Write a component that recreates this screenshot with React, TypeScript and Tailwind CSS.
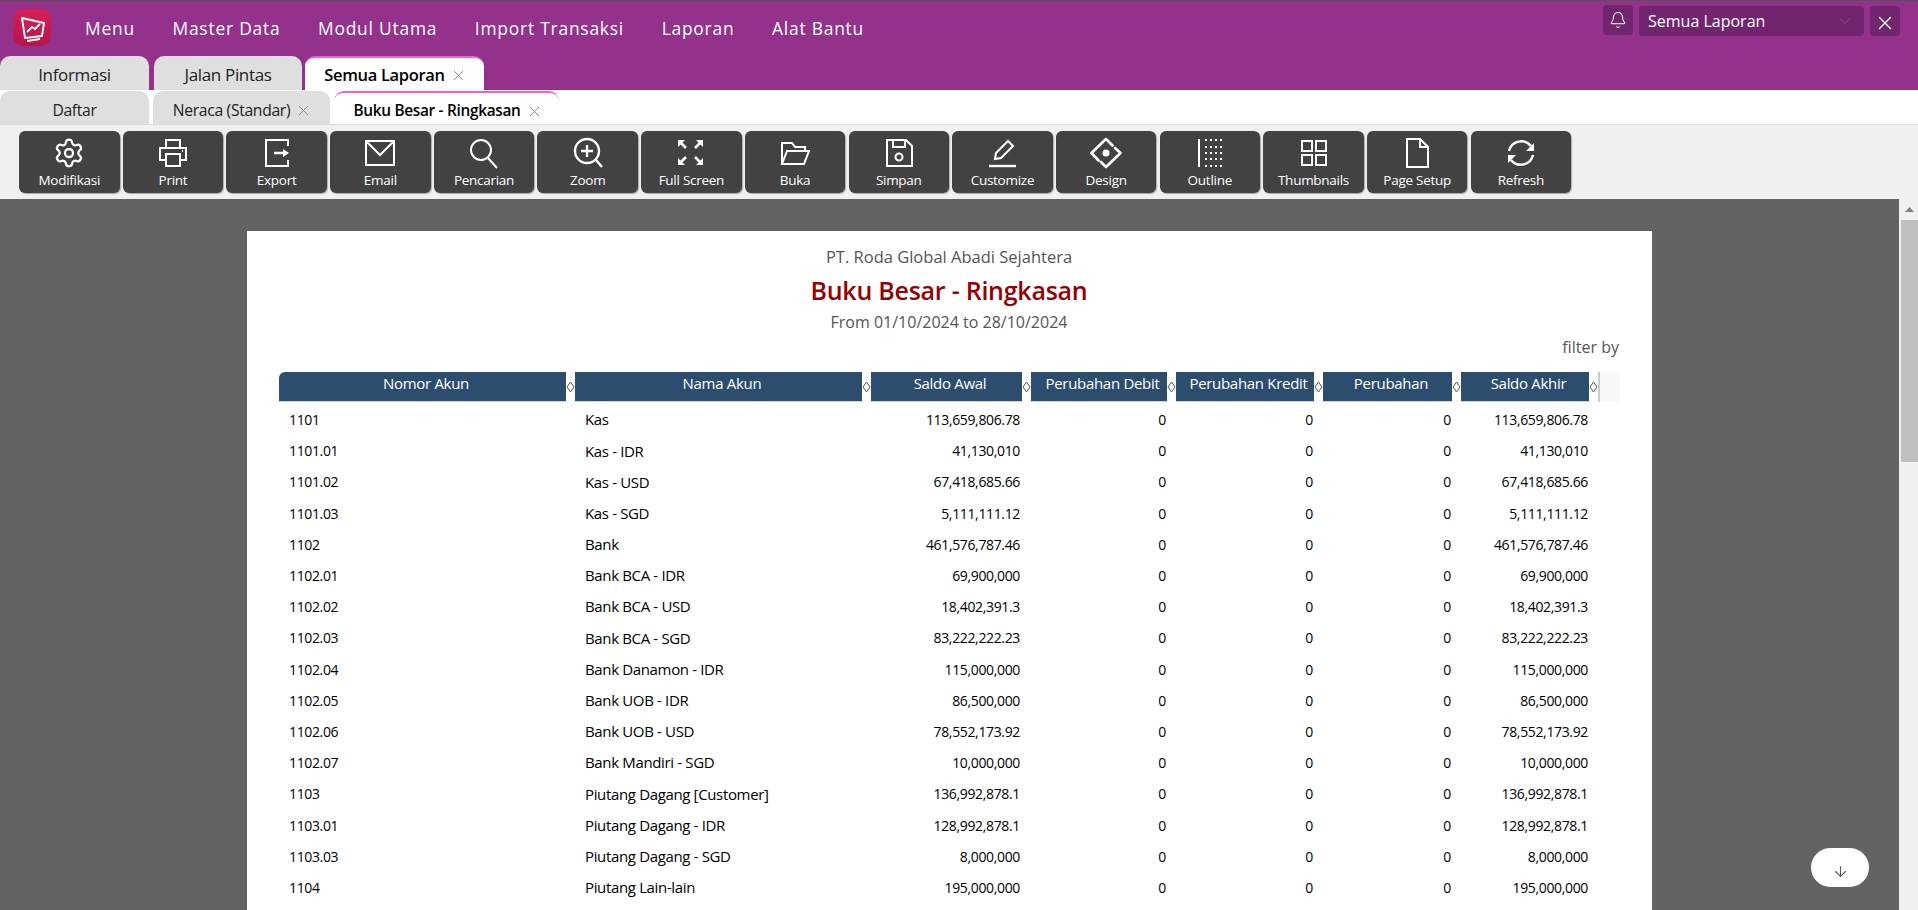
import { Bell, ChevronDown, ArrowDown, Settings, X } from 'lucide-react'
import type { ReactNode } from 'react'

const MENUS = ['Menu', 'Master Data', 'Modul Utama', 'Import Transaksi', 'Laporan', 'Alat Bantu']

const ic = (children: ReactNode) => (
  <svg width="32" height="32" viewBox="0 0 32 32" fill="none" stroke="white" strokeWidth="2">
    {children}
  </svg>
)

const TOOLS: { label: string; icon: ReactNode }[] = [
  { label: 'Modifikasi', icon: <Settings size={32} strokeWidth={1.7} color="white" /> },
  {
    label: 'Print',
    icon: ic(
      <>
        <path d="M9 11V3h14v8" />
        <path d="M9 23H3V11h26v12h-6" />
        <path d="M9 17h14v12H9z" />
        <path d="M25 14h1" />
      </>,
    ),
  },
  {
    label: 'Export',
    icon: ic(
      <>
        <path d="M27 9V3H5v26h22v-6" />
        <path d="M13 16h10" strokeWidth="2.5" />
        <path d="M22 12l6 4-6 4z" fill="white" stroke="none" />
      </>,
    ),
  },
  {
    label: 'Email',
    icon: ic(
      <>
        <path d="M2 4h28v24H2z" />
        <path d="M2 4l14 14L30 4" />
      </>,
    ),
  },
  {
    label: 'Pencarian',
    icon: ic(
      <>
        <circle cx="13" cy="13" r="10" />
        <path d="M20 21l9 10" />
      </>,
    ),
  },
  {
    label: 'Zoom',
    icon: ic(
      <>
        <circle cx="15" cy="14" r="12" strokeWidth="2.4" />
        <path d="M15 8v12M9 14h12" strokeWidth="2.4" />
        <path d="M24 23l6 7" strokeWidth="2.4" />
      </>,
    ),
  },
  {
    label: 'Full Screen',
    icon: ic(
      <>
        <path d="M5 5l6 6M26 5l-6 6M5 26l6-6M26 26l-6-6" strokeWidth="2.6" />
        <path d="M3 3h7l-7 7zM28 3h-7l7 7zM3 28h7l-7-7zM28 28h-7l7-7z" fill="white" stroke="none" />
      </>,
    ),
  },
  {
    label: 'Buka',
    icon: ic(
      <>
        <path d="M3 27V6h10l3 4h10v4" />
        <path d="M3 27l5-13h22l-5 13z" />
      </>,
    ),
  },
  {
    label: 'Simpan',
    icon: ic(
      <>
        <path d="M4 3h19l6 6v20H4z" />
        <path d="M10 3v7h12V3" />
        <circle cx="16" cy="20" r="3.5" />
      </>,
    ),
  },
  {
    label: 'Customize',
    icon: ic(
      <>
        <path d="M9 22l1-6L22 4l5 5-12 12z" />
        <path d="M3 29h27" strokeWidth="2.4" />
      </>,
    ),
  },
  {
    label: 'Design',
    icon: ic(
      <>
        <path d="M8.500 23.500L1.500 16 16 2l6.500 6.500" strokeWidth="2.6" strokeLinecap="round" strokeLinejoin="round" />
        <path d="M25 11l5.500 5L16 30l-5-5" strokeWidth="2.6" strokeLinecap="round" strokeLinejoin="round" />
        <circle cx="16" cy="16" r="3.5" fill="white" stroke="none" />
      </>,
    ),
  },
  {
    label: 'Outline',
    icon: ic(
      <>
        <path d="M5 2v28" />
        <path d="M11 3h18M11 10h18M11 16h18M11 22h18M11 29h18" strokeDasharray="2 3" />
      </>,
    ),
  },
  {
    label: 'Thumbnails',
    icon: ic(
      <>
        <path d="M4 4h10v10H4zM18 4h10v10H18zM4 18h10v10H4zM18 18h10v10H18z" />
      </>,
    ),
  },
  {
    label: 'Page Setup',
    icon: ic(
      <>
        <path d="M6 2h13l8 8v20H6z" />
        <path d="M19 2v8h8" />
      </>,
    ),
  },
  {
    label: 'Refresh',
    icon: ic(
      <>
        <path d="M4 14A12.5 12.5 0 0 1 26 9" strokeWidth="2.4" />
        <path d="M28 18A12.5 12.5 0 0 1 6 23" strokeWidth="2.4" />
        <path d="M29 6v8h-8zM3 26v-8h8z" fill="white" stroke="none" />
      </>,
    ),
  },
]

const COLUMNS = ['Nomor Akun', 'Nama Akun', 'Saldo Awal', 'Perubahan Debit', 'Perubahan Kredit', 'Perubahan', 'Saldo Akhir']

const ROWS = [
  ['1101', 'Kas', '113,659,806.78'],
  ['1101.01', 'Kas - IDR', '41,130,010'],
  ['1101.02', 'Kas - USD', '67,418,685.66'],
  ['1101.03', 'Kas - SGD', '5,111,111.12'],
  ['1102', 'Bank', '461,576,787.46'],
  ['1102.01', 'Bank BCA - IDR', '69,900,000'],
  ['1102.02', 'Bank BCA - USD', '18,402,391.3'],
  ['1102.03', 'Bank BCA - SGD', '83,222,222.23'],
  ['1102.04', 'Bank Danamon - IDR', '115,000,000'],
  ['1102.05', 'Bank UOB - IDR', '86,500,000'],
  ['1102.06', 'Bank UOB - USD', '78,552,173.92'],
  ['1102.07', 'Bank Mandiri - SGD', '10,000,000'],
  ['1103', 'Piutang Dagang [Customer]', '136,992,878.1'],
  ['1103.01', 'Piutang Dagang - IDR', '128,992,878.1'],
  ['1103.03', 'Piutang Dagang - SGD', '8,000,000'],
  ['1104', 'Piutang Lain-lain', '195,000,000'],
]

const GRID = 'grid grid-cols-[296px_296px_160px_145px_147px_138px_137px_22px]'

function Tab({ label, active, closable, className }: { label: string; active?: boolean; closable?: boolean; className: string }) {
  return (
    <div
      className={
        (active
          ? 'bg-white border-t-2 border-[#ec5fe4] text-black font-semibold '
          : 'bg-[#dfdfdf] text-[#222] ') +
        'flex h-full items-center justify-center gap-[5px] rounded-t-[10px] tracking-[-0.02em] ' +
        className
      }
    >
      {label}
      {closable && <X size={17} strokeWidth={1.3} color="#888" />}
    </div>
  )
}

function Diamond() {
  return (
    <svg width="9" height="12" viewBox="0 0 9 12" fill="none" stroke="#555" strokeWidth="1" className="absolute right-0 top-[9px]">
      <path d="M4.5 1L8 6l-3.500 5L1 6z" />
    </svg>
  )
}

export default function App() {
  return (
    <div className="relative flex h-screen w-full flex-col overflow-hidden bg-white font-['Open_Sans',sans-serif]">
      <header className="h-[90px] shrink-0 border-t border-[#555] bg-[#93318b]">
        <div className="flex h-[55px] items-start">
          <div className="ml-[13px] mt-2 flex h-[37px] w-[38px] items-center justify-center rounded-[10px] bg-gradient-to-b from-[#d91f58] to-[#b5144c]">
            <svg width="38" height="37" viewBox="0 0 38 37" fill="none" stroke="white" strokeWidth="1.900" strokeLinejoin="round">
              <path d="M9 9l22 5-2 13-17 2z" />
              <path d="M14 23l5-5 3 2 5-5" />
              <path d="M14 32l13-2" />
            </svg>
          </div>
          <nav className="ml-[34px] mt-[17px] flex gap-[37.600px] text-[17.400px] leading-[20px] tracking-[0.045em] text-white">
            {MENUS.map((m) => (
              <span key={m}>{m}</span>
            ))}
          </nav>
          <div className="ml-auto mr-[18px] mt-1 flex gap-[6px]">
            <div className="flex h-[30px] w-[30px] items-center justify-center rounded-[4px] bg-[#71256e]">
              <Bell size={18} strokeWidth={1.4} color="white" />
            </div>
            <div className="mt-px flex h-[30px] w-[225px] items-center justify-between rounded-[4px] bg-[#71256e] pl-[9px] pr-[9px] text-[16px] text-white">
              Semua Laporan
              <ChevronDown size={20} strokeWidth={1.2} color="#8f4a8c" />
            </div>
            <div className="mt-px flex h-[30px] w-[30px] items-center justify-center rounded-[4px] bg-[#71256e] pt-[3px]">
              <X size={22} strokeWidth={1.5} color="white" />
            </div>
          </div>
        </div>
        <div className="flex h-[34px]">
          <Tab label="Informasi" className="w-[149px] pt-[4px] text-[17px]" />
          <Tab label="Jalan Pintas" className="ml-[5px] w-[148px] pt-[4px] text-[17px]" />
          <Tab label="Semua Laporan" active closable className="ml-[3px] w-[179px] pl-[2px] pt-[3px] text-[16.500px]" />
        </div>
      </header>

      <div className="flex h-[34px] shrink-0 items-end bg-white pt-px">
        <Tab label="Daftar" className="w-[149px] pt-[6px] text-[15.700px]" />
        <Tab label="Neraca (Standar)" closable className="ml-[4px] w-[177px] pl-[2px] pt-[6px] text-[15.700px]" />
        <Tab label="Buku Besar - Ringkasan" active closable className="ml-[4px] w-[225px] pl-[3px] pt-[5px] text-[15.400px]" />
      </div>

      <div className="flex h-[75px] shrink-0 gap-[3.200px] border-t border-[#dcdcdc] bg-[#f0f0f0] pl-[19px] pt-[6px]">
        {TOOLS.map((t) => (
          <div
            key={t.label}
            className="flex h-[62px] w-[100.500px] flex-col items-center rounded-[6px] bg-[#424242] pt-[6px] text-[13.500px] leading-[20px] tracking-[-0.02em] text-white shadow-[1px_1px_1px_#aaa]"
          >
            <div className="h-[33px]">{t.icon}</div>
            {t.label}
          </div>
        ))}
      </div>

      <div className="flex min-h-0 flex-1">
        <main className="flex min-w-0 flex-1 justify-center overflow-hidden bg-[#636363] pt-[32px]">
          <div className="h-[800px] w-[1405px] shrink-0 bg-white pl-[32px] pr-[33px] pt-[14px]">
            <div className="text-center text-[16.500px] leading-[24px] text-[#555]">PT. Roda Global Abadi Sejahtera</div>
            <div className="mt-px text-center text-[25px] font-semibold leading-[40px] tracking-[-0.01em] text-[#990000]">Buku Besar - Ringkasan</div>
            <div className="text-center text-[16px] leading-[24px] text-[#555]">From 01/10/2024 to 28/10/2024</div>
            <div className="text-right text-[16px] leading-[26px] text-[#555]">filter by</div>
            <div className={GRID + ' mt-[12px] h-[30px] text-[15px] leading-[22px] text-white'}>
              {COLUMNS.map((c, i) => (
                <div key={c} className="relative pr-[9px]">
                  <div className={(i === 0 ? 'rounded-tl-[6px] ' : '') + 'h-full border-b border-[#cdd6df] bg-[#2d4d6e] pl-[7px] text-center tracking-[-0.02em]'}>{c}</div>
                  <Diamond />
                </div>
              ))}
              <div className="border-l-2 border-[#c4cbd2] bg-[#f8f8f8]" />
            </div>
            <div className="pt-[2px]">
              {ROWS.map((r) => (
                <div key={r[0]} className={GRID + ' h-[31.200px] items-center text-[14px] tracking-[-0.025em] text-black'}>
                  <div className="pl-[10px]">{r[0]}</div>
                  <div className="pl-[10px] text-[15px]">{r[1]}</div>
                  <div className="pr-[11px] text-right">{r[2]}</div>
                  <div className="pr-[10px] text-right">0</div>
                  <div className="pr-[10px] text-right">0</div>
                  <div className="pr-[10px] text-right">0</div>
                  <div className="pr-[10px] text-right">{r[2]}</div>
                </div>
              ))}
            </div>
          </div>
        </main>
        <aside className="flex w-[19px] shrink-0 flex-col items-end bg-[#f0f0f0] pt-2">
          <svg width="9" height="5" viewBox="0 0 9 5" fill="#808080" className="mr-[4px]">
            <path d="M4.500 0L9 5H0z" />
          </svg>
          <div className="mt-2 h-[242px] w-[17px] bg-[#bfbfbf]" />
        </aside>
      </div>

      <button className="absolute left-[1811px] top-[848px] flex h-[39px] w-[58px] items-center justify-center rounded-[20px] bg-white pt-[8px]">
        <ArrowDown size={17} strokeWidth={1.5} color="#555" />
      </button>
    </div>
  )
}
